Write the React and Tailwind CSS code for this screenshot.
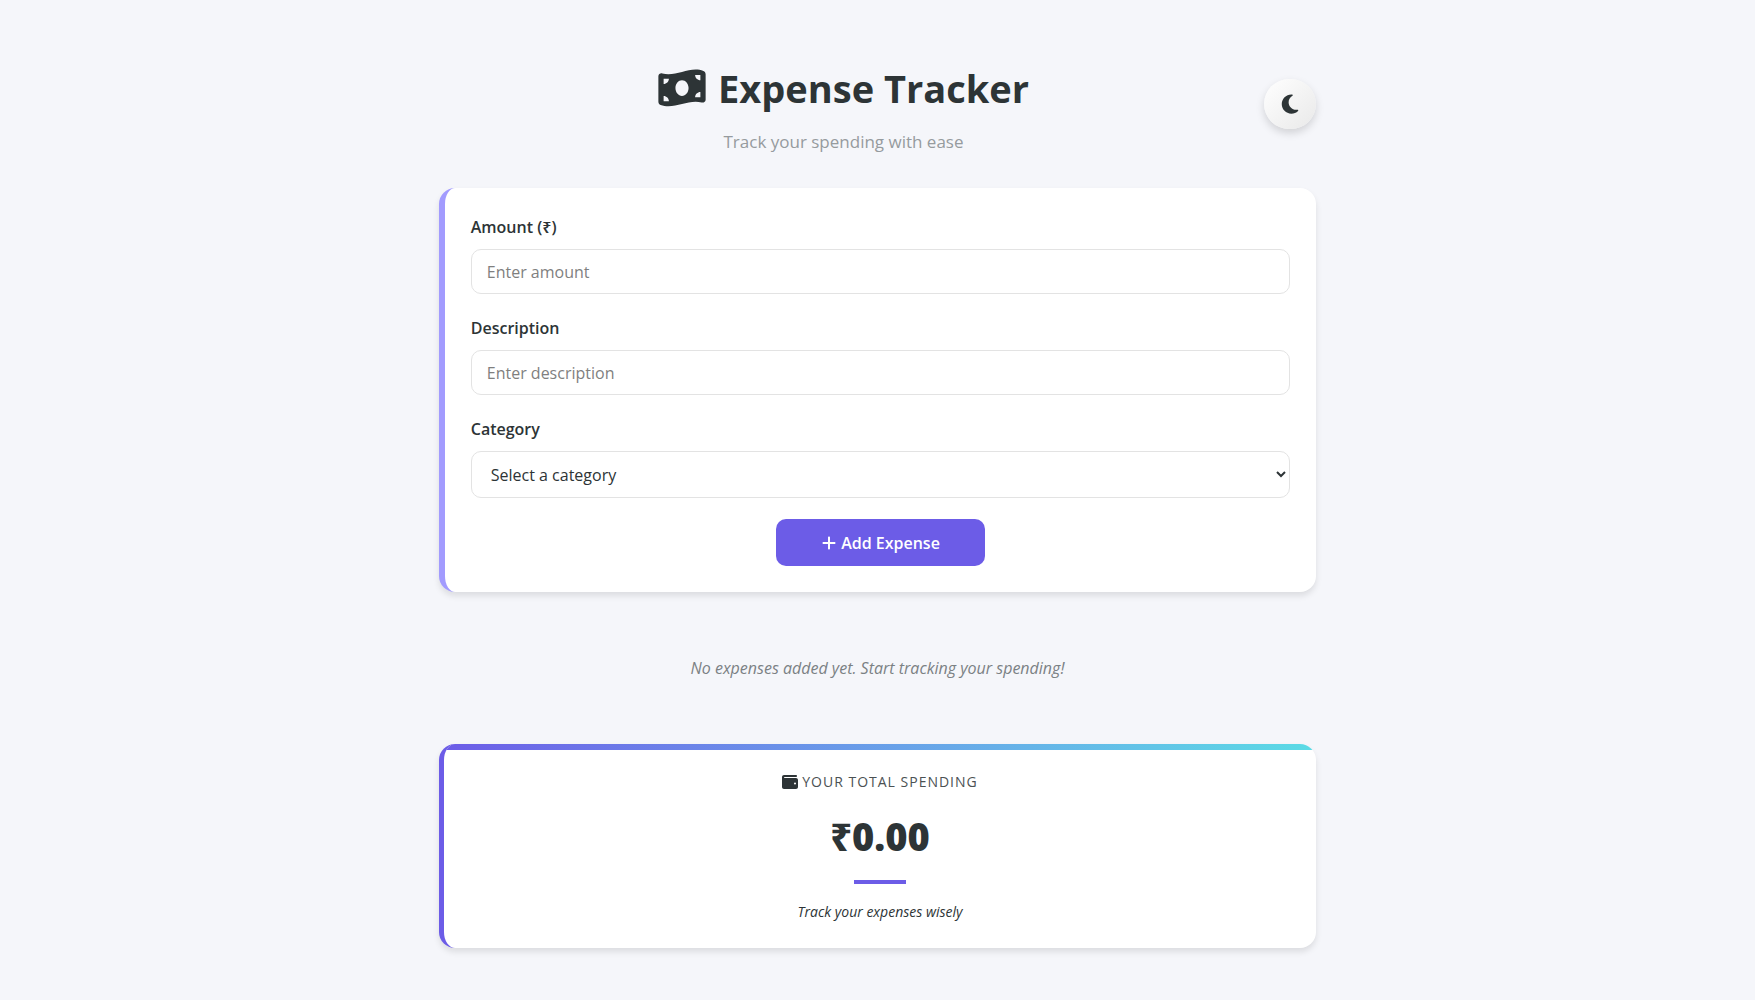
import { useState } from "react";
import { FaMoneyBillWave, FaMoon, FaPlus, FaWallet } from "react-icons/fa6";

const categories = ["Food", "Transport", "Shopping", "Bills", "Other"];

const labelClass = "mb-[9px] block text-base leading-[26px] font-semibold";
const fieldClass =
  "block w-full rounded-[10px] border border-[#e3e3e3] bg-white px-[15px] text-base placeholder:text-[#7f7f7f]";

function ExpenseForm() {
  const [category, setCategory] = useState("");
  return (
    <form
      className="rounded-2xl border-l-[6px] border-[#a29bfe] bg-white p-[26px] shadow-[0_4px_6px_rgba(0,0,0,0.1)]"
      onSubmit={(e) => e.preventDefault()}
    >
      <div className="mb-[21px]">
        <label htmlFor="amount" className={labelClass}>
          Amount (₹)
        </label>
        <input id="amount" type="number" placeholder="Enter amount" className={`${fieldClass} h-[45px]`} />
      </div>
      <div className="mb-[21px]">
        <label htmlFor="description" className={labelClass}>
          Description
        </label>
        <input id="description" type="text" placeholder="Enter description" className={`${fieldClass} h-[45px]`} />
      </div>
      <div className="mb-[21px]">
        <label htmlFor="category" className={labelClass}>
          Category
        </label>
        <select
          id="category"
          value={category}
          onChange={(e) => setCategory(e.target.value)}
          className={`${fieldClass} h-[47px]`}
        >
          <option value="">Select a category</option>
          {categories.map((c) => (
            <option key={c}>{c}</option>
          ))}
        </select>
      </div>
      <button
        type="submit"
        className="mx-auto flex h-[47px] w-[209px] items-center justify-center gap-1 rounded-[10px] bg-[#6c5ce7] text-base font-semibold text-white"
      >
        <FaPlus className="size-4" />
        Add Expense
      </button>
    </form>
  );
}

function TotalCard() {
  return (
    <section className="relative overflow-hidden rounded-2xl border-l-[5px] border-[#6c5ce7] bg-white px-6 pt-[26px] pb-6 text-center shadow-[0_4px_6px_rgba(0,0,0,0.1)]">
      <div className="absolute inset-x-0 top-0 h-1.5 bg-linear-to-r from-[#6c5ce7] to-[#5adbe5]" />
      <h2 className="flex items-center justify-center gap-1 text-sm leading-6 tracking-[1px] uppercase">
        <FaWallet className="size-4" />
        <span className="text-[#4b5153]">Your total spending</span>
      </h2>
      <p className="mt-3 text-[38px] leading-[60px] font-extrabold">₹0.00</p>
      <div className="mx-auto mt-3.5 h-1 w-[52px] bg-[#6c5ce7]" />
      <p className="mt-4 text-sm leading-6 italic">Track your expenses wisely</p>
    </section>
  );
}

export default function App() {
  return (
    <div className="min-h-screen bg-[#f5f6fa] pt-[52px] pb-12 font-['Open_Sans','Noto_Sans',sans-serif] text-[#2d3436]">
      <main className="mx-auto w-1/2">
        <header className="mb-8 flex items-center gap-4">
          <div className="flex-1 text-center">
            <h1 className="flex items-center justify-center gap-3 text-[38px] leading-[72px] font-bold whitespace-nowrap">
              <FaMoneyBillWave className="h-[42px] w-12" />
              Expense Tracker
            </h1>
            <p className="mt-1 text-[17px] leading-7 text-[#969b9e]">Track your spending with ease</p>
          </div>
          <button
            type="button"
            aria-label="Toggle dark mode"
            className="flex h-[50px] w-[52px] items-center justify-center rounded-full bg-linear-to-br from-white to-[#e9e9e9] shadow-[0_4px_8px_rgba(0,0,0,0.15)]"
          >
            <FaMoon className="size-[22px]" />
          </button>
        </header>
        <ExpenseForm />
        <p className="my-16 text-center text-base leading-6 text-[#7b8184] italic">
          No expenses added yet. Start tracking your spending!
        </p>
        <TotalCard />
      </main>
    </div>
  );
}
